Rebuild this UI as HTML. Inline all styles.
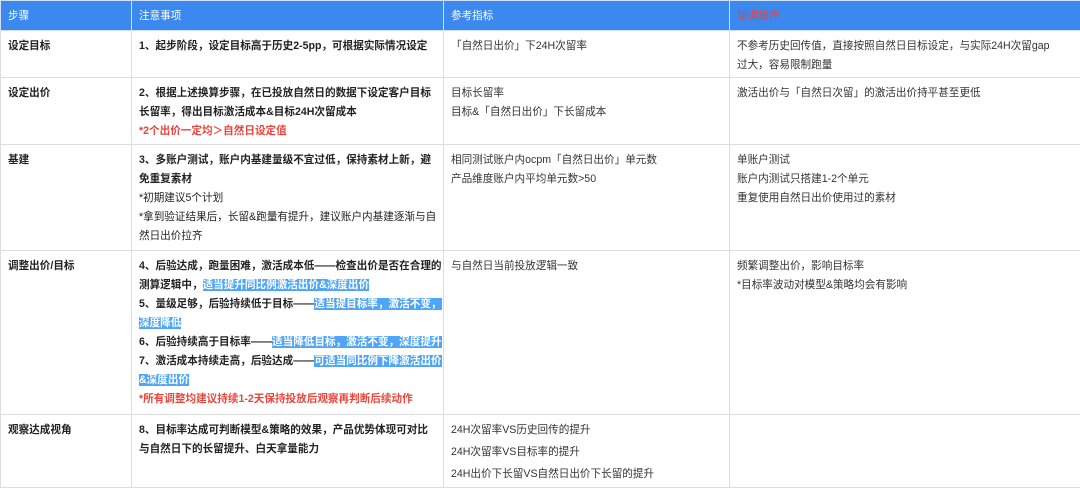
<!DOCTYPE html>
<html><head><meta charset="utf-8"><style>
body{margin:0;background:#fff;width:1080px;height:488px;overflow:hidden;font-family:"Liberation Sans","Noto Sans CJK SC",sans-serif;font-size:10.6px;color:#333}
table{border-collapse:collapse;table-layout:fixed;width:1080px;position:absolute;left:0;top:0}
td,th{border:1px solid #dcdcdc;vertical-align:top;padding:6px 2px 0 7px;line-height:19px;text-align:left;overflow:hidden;white-space:nowrap}
th{background:#3b88ee;color:#fff;font-weight:normal;height:22px;padding-top:6px;border-color:#cfe0f8}
td.b{font-weight:bold;color:#222}
.r{color:#e8453c}
.h{background:#4fa5f6;color:#fff}
p{margin:0}
.g p{margin-bottom:3px}
</style></head><body>
<table>
<col style="width:131px"><col style="width:312px"><col style="width:286px"><col style="width:351px">
<tr style="height:30px"><th>步骤</th><th>注意事项</th><th>参考指标</th><th><span class="r">错误操作</span></th></tr>
<tr style="height:47px"><td class="b">设定目标</td><td class="b">1、起步阶段，设定目标高于历史2-5pp，可根据实际情况设定</td><td>「自然日出价」下24H次留率</td><td>不参考历史回传值，直接按照自然日目标设定，与实际24H次留gap<br>过大，容易限制跑量</td></tr>
<tr style="height:67px"><td class="b">设定出价</td><td class="b">2、根据上述换算步骤，在已投放自然日的数据下设定客户目标<br>长留率，得出目标激活成本&amp;目标24H次留成本<br><span class="r">*2个出价一定均＞自然日设定值</span></td><td>目标长留率<br>目标&amp;「自然日出价」下长留成本</td><td>激活出价与「自然日次留」的激活出价持平甚至更低</td></tr>
<tr style="height:106px"><td class="b">基建</td><td class="b">3、多账户测试，账户内基建量级不宜过低，保持素材上新，避<br>免重复素材<br><span style="font-weight:normal">*初期建议5个计划<br>*拿到验证结果后，长留&amp;跑量有提升，建议账户内基建逐渐与自<br>然日出价拉齐</span></td><td>相同测试账户内ocpm「自然日出价」单元数<br>产品维度账户内平均单元数&gt;50</td><td>单账户测试<br>账户内测试只搭建1-2个单元<br>重复使用自然日出价使用过的素材</td></tr>
<tr style="height:164px"><td class="b">调整出价/目标</td><td class="b">4、后验达成，跑量困难，激活成本低——检查出价是否在合理的<br>测算逻辑中，<span class="h">适当提升同比例激活出价&amp;深度出价</span><br>5、量级足够，后验持续低于目标——<span class="h">适当提目标率，激活不变，</span><br><span class="h">深度降低</span><br>6、后验持续高于目标率——<span class="h">适当降低目标，激活不变，深度提升</span><br>7、激活成本持续走高，后验达成——<span class="h">可适当同比例下降激活出价</span><br><span class="h">&amp;深度出价</span><br><span class="r">*所有调整均建议持续1-2天保持投放后观察再判断后续动作</span></td><td>与自然日当前投放逻辑一致</td><td>频繁调整出价，影响目标率<br>*目标率波动对模型&amp;策略均会有影响</td></tr>
<tr style="height:72px"><td class="b">观察达成视角</td><td class="b">8、目标率达成可判断模型&amp;策略的效果，产品优势体现可对比<br>与自然日下的长留提升、白天拿量能力</td><td class="g"><p>24H次留率VS历史回传的提升</p><p>24H次留率VS目标率的提升</p><p>24H出价下长留VS自然日出价下长留的提升</p></td><td></td></tr>
</table>
</body></html>
